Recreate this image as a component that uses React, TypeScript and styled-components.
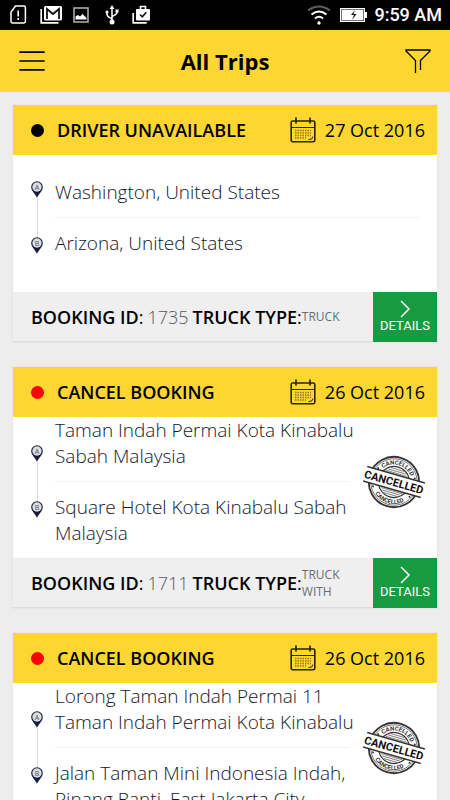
import React from "react";
import styled, { createGlobalStyle } from "styled-components";

const GlobalStyle = createGlobalStyle`
  * { box-sizing: border-box; }
  body {
    margin: 0;
    background: #ededed;
    font-family: "Open Sans", sans-serif;
    color: #000;
  }
`;

const Screen = styled.div`
  display: flex;
  flex-direction: column;
  height: 100vh;
`;

const StatusBar = styled.div`
  display: flex;
  flex: none;
  align-items: center;
  justify-content: space-between;
  height: 30px;
  padding: 0 8px 0 9px;
  background: #000;
  color: #fff;
`;

const StatusGroup = styled.div<{ $gap: number }>`
  display: flex;
  align-items: center;
  gap: ${(p) => p.$gap}px;

  svg { display: block; }
`;

const Clock = styled.time`
  font: 500 18px/30px Roboto, sans-serif;
`;

const AppBar = styled.header`
  display: grid;
  flex: none;
  grid-template-columns: 28px 1fr 28px;
  align-items: center;
  height: 62px;
  padding: 0 18px;
  background: #fdd631;
`;

const Title = styled.h1`
  margin: 0;
  font-size: 22px;
  line-height: 30px;
  font-weight: 700;
  text-align: center;
`;

const IconButton = styled.button`
  display: flex;
  align-items: center;
  justify-content: center;
  height: 40px;
  padding: 0;
  border: 0;
  background: none;
  color: #000;
  cursor: pointer;
`;

const TripList = styled.main`
  display: flex;
  flex: 1;
  flex-direction: column;
  gap: 25px;
  min-height: 0;
  padding: 13px;
  overflow-y: auto;
  scrollbar-width: none;
`;

const Card = styled.article`
  flex: none;
  background: #fff;
  box-shadow: 0 0 1px 1px #e6e6e6;
`;

const CardHeader = styled.div`
  display: flex;
  align-items: center;
  height: 50px;
  padding: 0 12px 0 18px;
  background: #fdd631;
`;

const StatusDot = styled.span<{ $color: string }>`
  width: 13px;
  height: 13px;
  margin-right: 13px;
  border-radius: 50%;
  background: ${(p) => p.$color};
`;

const StatusText = styled.h2`
  flex: 1;
  margin: 0;
  font-size: 18px;
  line-height: 26px;
  font-weight: 600;
`;

const TripDate = styled.time`
  margin-left: 9px;
  font-size: 18px;
  line-height: 26px;
`;

const CardBody = styled.div`
  display: flex;
  align-items: stretch;
  padding: 0 12px 0 18px;
`;

const Rail = styled.div`
  display: flex;
  flex: none;
  flex-direction: column;
  align-items: center;
  justify-content: center;
  width: 12px;
  margin-right: 12px;
  padding-bottom: 12px;

  svg { display: block; }
`;

const RailLine = styled.span`
  width: 1px;
  height: 39px;
  background: #dadada;
`;

const Route = styled.div`
  display: flex;
  flex: 1;
  flex-direction: column;
  min-width: 0;
  color: #14182b;
  font-size: 19px;
  line-height: 26px;
  font-weight: 300;
`;

const Pickup = styled.div`
  display: flex;
  align-items: flex-end;
  min-height: 62px;
  padding-bottom: 12px;
`;

const Divider = styled.hr`
  width: auto;
  height: 1px;
  margin: 0 5px 0 0;
  border: 0;
  background: #f3f3f3;
`;

const Dropoff = styled.div`
  min-height: 74px;
  padding: 12px 0;
`;

const StampSlot = styled.div`
  display: flex;
  flex: none;
  align-items: center;
  width: 62px;
  margin-left: 8px;
  padding-bottom: 12px;

  svg { display: block; }
`;

const CardFooter = styled.div`
  display: flex;
  align-items: center;
  height: 50px;
  padding-left: 18px;
  border-bottom: 1px solid #dcdcdc;
  background: #efefef;
  font-size: 18px;
  line-height: 26px;
`;

const Label = styled.span`
  font-weight: 600;
`;

const BookingId = styled.span`
  margin: 0 4px;
  color: #54565f;
  font-weight: 300;
`;

const TruckType = styled.span`
  width: 52px;
  color: #6a6c75;
  font-size: 12px;
  line-height: 17px;
`;

const DetailsButton = styled.button`
  display: flex;
  flex: none;
  flex-direction: column;
  align-items: center;
  justify-content: center;
  width: 64px;
  height: 50px;
  margin: 0 0 -1px auto;
  padding: 0;
  border: 0;
  background: #169b42;
  color: #fff;
  font: 400 13px/16px Roboto, sans-serif;
  cursor: pointer;
`;

const SimIcon = () => (
  <svg width="20" height="20" viewBox="0 0 20 20" fill="none" stroke="#fff">
    <path d="M6.500 1H15a1.400 1.400 0 0 1 1.400 1.400v14.200A1.400 1.400 0 0 1 15 18H3.400A1.400 1.400 0 0 1 2 16.600V7z" strokeWidth="1.500" />
    <path d="M9.200 5.500v6M9.200 13v2" strokeWidth="1.600" />
  </svg>
);

const MailIcon = () => (
  <svg width="22" height="20" viewBox="0 0 22 20">
    <path d="M1.200 4v13.800h17.300" fill="none" stroke="#fff" strokeWidth="1.700" />
    <rect x="4" y="1" width="18" height="14.500" rx="1.500" fill="#fff" />
    <path d="M7 14V4l6 5 6-5v10" fill="none" stroke="#111" strokeWidth="1.800" />
  </svg>
);

const PhotoIcon = () => (
  <svg width="16" height="16" viewBox="0 0 16 16">
    <rect x="1" y="1" width="14" height="14" fill="none" stroke="#b4b4b4" strokeWidth="1.500" />
    <path d="M2.500 12.500v-3l2.500-1.500 2 1.500 2.500-2.500 4 4v1.500z" fill="#fff" />
  </svg>
);

const UsbIcon = () => (
  <svg width="21" height="20" viewBox="-5 0 21 20" fill="none" stroke="#fff" strokeWidth="1.500">
    <path d="M7 3v14M7 14.500C6 12 2 13 2 9V7M7 12c1-2 5-1.500 5-5V6" />
    <path d="M7 0l2.500 4h-5z" fill="#fff" stroke="none" />
    <circle cx="2" cy="7" r="1.500" fill="#fff" stroke="none" />
    <rect x="10.500" y="4.500" width="3" height="3" fill="#fff" stroke="none" />
    <circle cx="7" cy="17" r="2.500" fill="#fff" stroke="none" />
  </svg>
);

const ShopIcon = () => (
  <svg width="19" height="20" viewBox="0 0 19 20">
    <path d="M1.200 8v9.800h13.500" fill="none" stroke="#fff" strokeWidth="1.700" />
    <path d="M8.500 4V1.500h5V4" fill="none" stroke="#fff" strokeWidth="1.600" />
    <rect x="4" y="4" width="14" height="11.500" rx="1" fill="#fff" />
    <path d="M8 9.500l2.300 2.300 4-4.500" fill="none" stroke="#111" strokeWidth="1.600" />
  </svg>
);

const WifiIcon = () => (
  <svg width="26" height="20" viewBox="0 0 26 20" fill="none" strokeWidth="2">
    <path d="M1 5.500q11-8 22 0" stroke="#5e5e5e" />
    <path d="M4.500 9.500q7.500-6 15 0M8 13.500q4-3.500 8 0" stroke="#fff" />
    <circle cx="12" cy="18" r="1.700" fill="#fff" />
  </svg>
);

const BatteryIcon = () => (
  <svg width="27" height="16" viewBox="0 0 27 16">
    <rect x="0" y="1" width="25" height="14" fill="#fff" />
    <rect x="1.500" y="2.500" width="22" height="11" fill="none" stroke="#777" />
    <rect x="25" y="5" width="2" height="6" fill="#fff" />
    <path d="M15 3l-4 5h3l-2 5 4.500-6h-3z" fill="#111" />
  </svg>
);

const MenuIcon = () => (
  <svg width="26" height="20" viewBox="0 0 26 20" fill="none" stroke="#000" strokeWidth="1.700" strokeLinecap="round">
    <path d="M1 1.200h24M1 10h24M1 18.800h24" />
  </svg>
);

const FilterIcon = () => (
  <svg width="26" height="24" viewBox="0 0 26 24" fill="none" stroke="#000" strokeWidth="1.300">
    <path d="M10.500 24V11.500L1 2V1h24v1l-9.500 9.500V21" />
  </svg>
);

const CalendarIcon = () => (
  <svg width="26" height="26" viewBox="0 0 26 26" fill="none" stroke="#2a2404">
    <rect x="1.200" y="4" width="23.600" height="20.800" rx="1.500" strokeWidth="1.600" />
    <path d="M1 10.500h24" strokeWidth="1" />
    <path d="M6 .500v6M20 .500v6" strokeWidth="1.700" />
    <path d="M5 13.500h16M5 16h16M5 18.500h16M5 21h11" strokeWidth="1.500" strokeDasharray="1.500 1" opacity=".5" />
    <path d="M18.500 22.500q4 .500 4.500-3" strokeWidth="1" />
  </svg>
);

const Pin = ({ letter }: { letter: string }) => (
  <svg width="12" height="17" viewBox="0 0 12 17">
    <path d="M6 .200A5.800 5.800 0 0 0 .200 6C.200 10 4 12.500 6 16.800 8 12.500 11.800 10 11.800 6A5.800 5.800 0 0 0 6 .200z" fill="#141c3c" />
    <circle cx="6" cy="6" r="4.700" fill="#dcdde0" />
    <text x="6" y="8.500" textAnchor="middle" fontFamily="Open Sans, sans-serif" fontSize="7" fill="#555">{letter}</text>
  </svg>
);

const ChevronIcon = () => (
  <svg width="12" height="18" viewBox="0 0 12 18" fill="none" stroke="#fff" strokeWidth="1.500">
    <path d="M2 1l8 8-8 8" />
  </svg>
);

const CancelledStamp = ({ id }: { id: string }) => (
  <svg width="62" height="54" viewBox="0 0 62 54" role="img" aria-label="Cancelled">
    <defs>
      <path id={`${id}-top`} d="M13.500 27a17.500 17.500 0 0 1 35 0" />
      <path id={`${id}-bottom`} d="M9 27a22 22 0 0 0 44 0" />
    </defs>
    <g transform="rotate(16 31 27)" fill="none" stroke="#333">
      <circle cx="31" cy="27" r="25.200" strokeWidth="1.800" />
      <circle cx="31" cy="27" r="23.200" strokeWidth=".600" />
      <circle cx="31" cy="27" r="15.500" strokeWidth="1.200" />
      <path d="M22 16h18M24 14h14M20 18h22M22 38h18M24 40h14M20 36h22" strokeWidth="1" opacity=".6" />
      <g fill="#333" stroke="none" fontFamily="Roboto, sans-serif" fontWeight="700" fontSize="6">
        <text><textPath href={`#${id}-top`} startOffset="50%" textAnchor="middle">CANCELLED</textPath></text>
        <text><textPath href={`#${id}-bottom`} startOffset="50%" textAnchor="middle">CANCELLED</textPath></text>
        <circle cx="12" cy="18" r="1" />
        <circle cx="50" cy="18" r="1" />
        <circle cx="12" cy="37" r="1" />
        <circle cx="50" cy="37" r="1" />
      </g>
      <rect x="1" y="19.500" width="60" height="15" fill="#fff" stroke="none" />
      <path d="M1 19.500h60M1 34.500h60" strokeWidth="1.400" />
      <text x="31" y="31" textAnchor="middle" fill="#111" stroke="none" fontFamily="Roboto, sans-serif" fontWeight="700" fontSize="11">CANCELLED</text>
    </g>
  </svg>
);

interface Trip {
  status: string;
  dot: string;
  date: string;
  from: string;
  to: string;
  cancelled?: boolean;
  booking?: { id: string; truck: string };
}

const trips: Trip[] = [
  {
    status: "DRIVER UNAVAILABLE",
    dot: "#000",
    date: "27 Oct 2016",
    from: "Washington, United States",
    to: "Arizona, United States",
    booking: { id: "1735", truck: "TRUCK" },
  },
  {
    status: "CANCEL BOOKING",
    dot: "#f00",
    date: "26 Oct 2016",
    from: "Taman Indah Permai Kota Kinabalu Sabah Malaysia",
    to: "Square Hotel Kota Kinabalu Sabah Malaysia",
    cancelled: true,
    booking: { id: "1711", truck: "TRUCK WITH" },
  },
  {
    status: "CANCEL BOOKING",
    dot: "#f00",
    date: "26 Oct 2016",
    from: "Lorong Taman Indah Permai 11 Taman Indah Permai Kota Kinabalu",
    to: "Jalan Taman Mini Indonesia Indah, Pinang Ranti, East Jakarta City",
    cancelled: true,
  },
];

const TripCard = ({ trip, id }: { trip: Trip; id: string }) => (
  <Card>
    <CardHeader>
      <StatusDot $color={trip.dot} />
      <StatusText>{trip.status}</StatusText>
      <CalendarIcon />
      <TripDate>{trip.date}</TripDate>
    </CardHeader>
    <CardBody>
      <Rail>
        <Pin letter="A" />
        <RailLine />
        <Pin letter="B" />
      </Rail>
      <Route>
        <Pickup>{trip.from}</Pickup>
        <Divider />
        <Dropoff>{trip.to}</Dropoff>
      </Route>
      {trip.cancelled && (
        <StampSlot>
          <CancelledStamp id={id} />
        </StampSlot>
      )}
    </CardBody>
    {trip.booking && (
      <CardFooter>
        <Label>BOOKING ID</Label>:
        <BookingId>{trip.booking.id}</BookingId>
        <Label>TRUCK TYPE</Label>:
        <TruckType>{trip.booking.truck}</TruckType>
        <DetailsButton type="button">
          <ChevronIcon />
          DETAILS
        </DetailsButton>
      </CardFooter>
    )}
  </Card>
);

export default function App() {
  return (
    <Screen>
      <GlobalStyle />
      <StatusBar>
        <StatusGroup $gap={11}>
          <SimIcon />
          <MailIcon />
          <PhotoIcon />
          <UsbIcon />
          <ShopIcon />
        </StatusGroup>
        <StatusGroup $gap={7}>
          <WifiIcon />
          <BatteryIcon />
          <Clock>9:59 AM</Clock>
        </StatusGroup>
      </StatusBar>
      <AppBar>
        <IconButton type="button" aria-label="Menu">
          <MenuIcon />
        </IconButton>
        <Title>All Trips</Title>
        <IconButton type="button" aria-label="Filter">
          <FilterIcon />
        </IconButton>
      </AppBar>
      <TripList>
        {trips.map((trip, i) => (
          <TripCard key={i} id={`stamp-${i}`} trip={trip} />
        ))}
      </TripList>
    </Screen>
  );
}
